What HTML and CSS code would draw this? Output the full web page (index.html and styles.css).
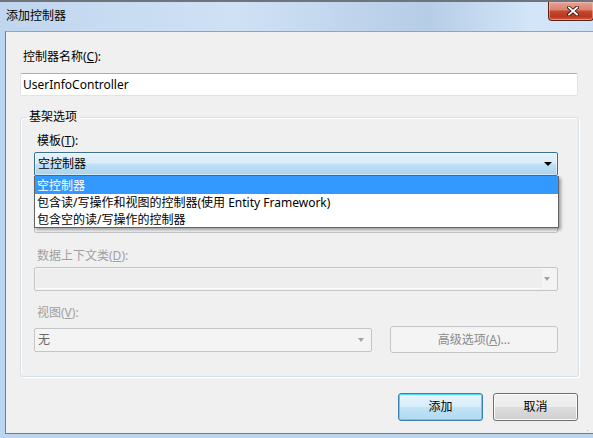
FILE: index.html
```html
<!DOCTYPE html>
<html lang="zh-CN">
<head>
  <meta charset="UTF-8">
  <meta name="viewport" content="width=device-width, initial-scale=1.0">
  <title>添加控制器</title>
  <link rel="stylesheet" href="styles.css">
</head>
<body>

  <div class="window">
    <!-- Title bar -->
    <div class="titlebar">
      <span class="title">添加控制器</span>
      <button class="close-btn" type="button" aria-label="关闭">
        <svg width="12" height="10" viewBox="0 0 12 10">
          <path d="M2 1.5 L10 8.5 M10 1.5 L2 8.5" stroke="#3a1a12" stroke-width="3.6" stroke-linecap="square"/>
          <path d="M2 1.5 L10 8.5 M10 1.5 L2 8.5" stroke="#ffffff" stroke-width="1.8" stroke-linecap="square"/>
        </svg>
      </button>
    </div>

    <!-- Dialog body -->
    <div class="client">
      <div class="form">
        <div class="field-label top-label">控制器名称(<u>C</u>):</div>
        <input class="text-input" type="text" value="UserInfoController">

        <fieldset class="group">
          <legend>基架选项</legend>

          <div class="field">
            <div class="field-label">模板(<u>T</u>):</div>
            <div class="combo-wrap">
              <div class="combo combo-open">
                <span>空控制器</span>
                <span class="arrow"></span>
              </div>
              <ul class="dropdown">
                <li class="selected">空控制器</li>
                <li>包含读/写操作和视图的控制器(使用 Entity Framework)</li>
                <li>包含空的读/写操作的控制器</li>
              </ul>
            </div>
          </div>

          <!-- model class row, covered by the open list -->
          <div class="field field-model">
            <div class="combo combo-disabled">
              <span></span>
              <span class="arrow"></span>
            </div>
          </div>

          <div class="field field-data">
            <div class="field-label disabled">数据上下文类(<u>D</u>):</div>
            <div class="combo combo-disabled">
              <span class="combo-edit"></span>
              <span class="arrow"></span>
            </div>
          </div>

          <div class="field field-view">
            <div class="field-label disabled">视图(<u>V</u>):</div>
            <div class="view-row">
              <div class="combo combo-disabled combo-view">
                <span>无</span>
                <span class="arrow"></span>
              </div>
              <button class="btn btn-disabled" type="button" disabled>高级选项(<u>A</u>)...</button>
            </div>
          </div>
        </fieldset>

        <div class="actions">
          <button class="btn btn-default" type="button">添加</button>
          <button class="btn" type="button">取消</button>
        </div>
      </div>
    </div>

    <span class="grip"></span>
  </div>

</body>
</html>
```

FILE: styles.css
```css
body {
  margin: 0;
  width: 593px;
  height: 438px;
  overflow: hidden;
  font-family: "Noto Sans", "Noto Sans CJK SC", sans-serif;
  font-size: 12px;
  line-height: 16px;
  color: #000;
  background: #bcd6f1;
}

u {
  text-decoration: underline;
  text-underline-offset: 1px;
}

.window {
  position: relative;
  width: 593px;
  height: 438px;
  display: flex;
  flex-direction: column;
}

/* ---------- title bar ---------- */

.titlebar {
  height: 31px;
  flex: none;
  display: flex;
  align-items: flex-start;
  box-sizing: border-box;
  border-top: 2px solid #6d747c;
  background: linear-gradient(90deg, #c0d6ee 0%, #cfe1f5 40%, #b6cde6 72%, #d3e6f9 90%, #cfe2f6 100%);
}

.title {
  padding-left: 6px;
  margin-top: 6px;
  color: #000;
}

.close-btn {
  margin-left: auto;
  margin-right: -1px;
  width: 46px;
  height: 19px;
  padding: 0;
  display: flex;
  align-items: center;
  justify-content: center;
  border: 1px solid #5b2318;
  border-top: none;
  border-radius: 0 0 4px 4px;
  background: linear-gradient(#e6a295 0%, #d98571 42%, #c8462e 52%, #b9371f 82%, #d0624a 100%);
  box-shadow: inset 0 0 0 1px rgba(255, 210, 200, 0.45);
}

.close-btn svg {
  margin-left: 4px;
}

/* ---------- client area ---------- */

.client {
  flex: 1;
  margin: 0 -12px 4px 5px;
  border: 1px solid #6e7f91;
  border-top-color: #93a4b6;
  background: #f0f0f0;
}

.form {
  width: 559px;
  margin-left: 14px;
}

.field-label {
  padding-left: 3px;
  padding-top: 2px;
  height: 16px;
  margin-bottom: 3px;
}

.field-label.disabled {
  color: #a0a0a0;
}

.top-label {
  padding-top: 0;
  margin-top: 17px;
  margin-bottom: 8px;
}

.text-input {
  display: block;
  box-sizing: border-box;
  width: 558px;
  height: 23px;
  margin: 0;
  padding: 0 2px;
  font: inherit;
  color: #000;
  border: 1px solid #dfe3e8;
  border-top-color: #abadb3;
  border-radius: 2px;
  background: #fff;
  outline: none;
}

/* ---------- group box ---------- */

.group {
  margin: 13px 0 0;
  padding: 6px 20px 23px 13px;
  border: 1px solid #d5dfe5;
  border-radius: 3px;
  box-shadow: inset 1px 1px 0 #fff, 1px 1px 0 #fff;
}

.group legend {
  margin-left: -7px;
  padding: 0 2px;
  line-height: 16px;
}

.field + .field {
  margin-top: 12px;
}

.field-model {
  padding-top: 21px;
}

.field.field-data {
  margin-top: 13px;
}

.field-view .field-label {
  margin-bottom: 5px;
}

.combo-wrap {
  position: relative;
}

.combo {
  box-sizing: border-box;
  height: 24px;
  display: flex;
  align-items: center;
  justify-content: space-between;
  padding: 0 5px 0 3px;
  border: 1px solid #707070;
  border-radius: 2px;
}

.arrow {
  width: 0;
  height: 0;
  border-left: 4px solid transparent;
  border-right: 4px solid transparent;
  border-top: 4px solid #000;
}

.combo-open {
  border-color: #3c6f95;
  background: linear-gradient(#e6f2fb 0%, #d9ecf9 45%, #bfe0f5 52%, #a9d3ef 100%);
  box-shadow: inset 0 0 0 1px rgba(255, 255, 255, 0.5);
}

.combo-disabled {
  border-color: #c3c6c9;
  background: #f4f4f4;
  color: #6a6a6a;
  padding-right: 0;
}

.combo-disabled .arrow {
  border-top-color: #a2a2a2;
  border-left-width: 3px;
  border-right-width: 3px;
  margin-right: 7px;
}

.combo-edit {
  flex: 1;
  align-self: stretch;
  margin: 1px 2px 1px -2px;
  background: #eeeeee;
  border-bottom: 1px solid #fbfbfb;
}

.dropdown {
  position: absolute;
  top: 100%;
  left: 0;
  z-index: 10;
  width: 525px;
  box-sizing: border-box;
  margin: 0;
  padding: 0;
  list-style: none;
  background: #fff;
  border: 1px solid #646464;
  border-top: none;
  box-shadow: 2px 2px 3px rgba(0, 0, 0, 0.35);
}

.dropdown li {
  height: 17px;
  line-height: 17px;
  padding-left: 2px;
  padding-top: 1px;
  margin-bottom: -1px;
  white-space: nowrap;
}

.dropdown li.selected {
  background: #3399ff;
  color: #fff;
}

.view-row {
  display: flex;
  align-items: center;
  justify-content: space-between;
  height: 27px;
}

.combo-view {
  width: 338px;
  padding-left: 3px;
}

/* ---------- buttons ---------- */

.btn {
  box-sizing: border-box;
  width: 85px;
  height: 28px;
  padding: 0;
  font: inherit;
  color: #000;
  border: 1px solid #707070;
  border-radius: 3px;
  background: linear-gradient(#f2f2f2 0%, #ebebeb 50%, #dddddd 51%, #cfcfcf 100%);
  box-shadow: inset 0 0 0 1px #fbfbfb;
}

.btn-default {
  border-color: #3c7fb1;
  background: linear-gradient(#e9f5fc 0%, #d6edfa 50%, #c2e3f6 51%, #b2daf2 100%);
  box-shadow: inset 0 0 0 1px #4ad8f8;
}

.btn-disabled {
  width: 168px;
  height: 27px;
  color: #8a8a8a;
  border-color: #c3c6c9;
  background: #f4f4f4;
  box-shadow: none;
}

.actions {
  display: flex;
  justify-content: flex-end;
  gap: 10px;
  margin-top: 16px;
  padding-right: 1px;
}

/* resize grip */
.grip {
  position: absolute;
  right: 3px;
  bottom: 5px;
  width: 7px;
  height: 7px;
  background: radial-gradient(circle, #b4b4b4 0.8px, transparent 1px) 0 0 / 3px 3px;
  clip-path: polygon(100% 0, 100% 100%, 0 100%);
}
```
